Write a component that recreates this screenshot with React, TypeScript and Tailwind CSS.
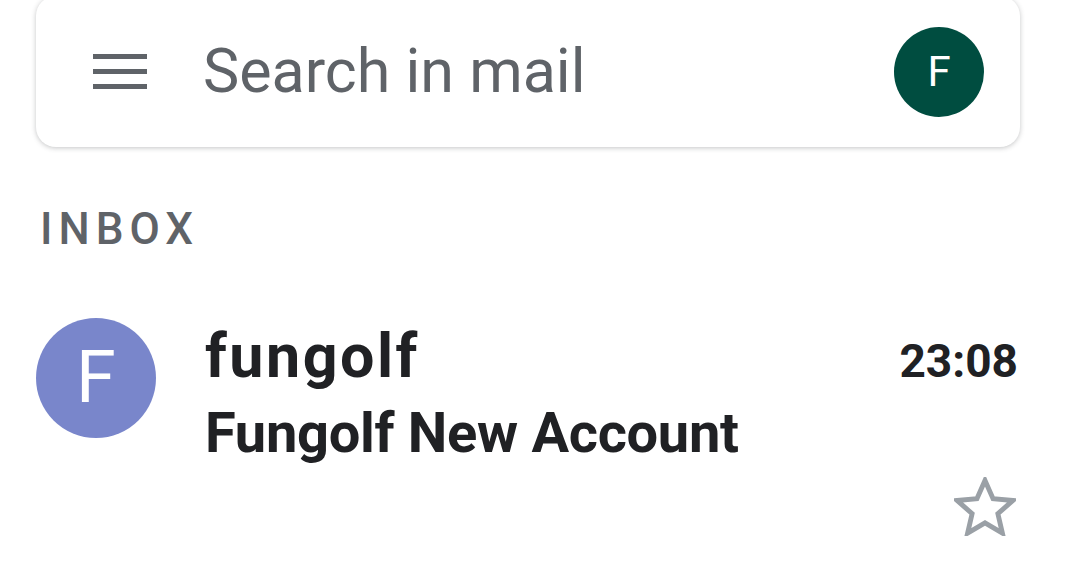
import React from 'react';

export default function App() {
  return (
    <div className="w-[1068px] h-[585px] bg-white overflow-hidden" style={{ fontFamily: 'Roboto, "Liberation Sans", sans-serif' }}>
      {/* search bar */}
      <div className="ml-[36px] mr-[48px] -mt-[4px] h-[151px] rounded-[20px] bg-white shadow-[0_1px_5px_rgba(60,64,67,0.3)] flex items-center pl-[57px] pr-[36px]">
        <svg width="54" height="35" viewBox="0 0 54 35" className="shrink-0">
          <rect x="0" y="0" width="54" height="5" fill="#5f6368" />
          <rect x="0" y="15" width="54" height="5" fill="#5f6368" />
          <rect x="0" y="30" width="54" height="5" fill="#5f6368" />
        </svg>
        <span className="ml-[56px] text-[61px] leading-none text-[#5f6368]">Search in mail</span>
        <div className="ml-auto w-[90px] h-[90px] rounded-full bg-[#004d40] flex items-center justify-center text-white text-[42px] leading-none">F</div>
      </div>

      {/* section label */}
      <div className="mt-[60px] ml-[40px] text-[44px] font-medium leading-none text-[#5f6368] tracking-[6px]">INBOX</div>

      {/* message row */}
      <div className="mt-[67px] ml-[36px] mr-[50px] flex">
        <div className="w-[120px] h-[120px] rounded-full bg-[#7986cb] flex items-center justify-center text-white text-[72px] shrink-0">F</div>
        <div className="ml-[49px] flex-1">
          <div className="flex items-baseline justify-between">
            <span className="text-[61px] font-bold leading-none text-[#202124] mt-[8px] tracking-[2.5px]">fungolf</span>
            <span className="text-[46px] font-bold leading-none text-[#202124]">23:08</span>
          </div>
          <div className="mt-[18px] text-[56px] font-bold leading-none text-[#202124] tracking-[-0.3px]">Fungolf New Account</div>
          <div className="flex justify-end mt-[16px] mr-[2px]">
            <svg width="62" height="59" viewBox="2.5 2.5 19 18">
              <path d="M12 3.5l2.47 5.6 6.1.55-4.62 4.05 1.38 5.96L12 16.5l-5.33 3.16 1.38-5.96-4.62-4.05 6.1-.55z" fill="none" stroke="#9aa0a6" strokeWidth="1.5" strokeLinejoin="miter" />
            </svg>
          </div>
        </div>
      </div>
    </div>
  );
}
